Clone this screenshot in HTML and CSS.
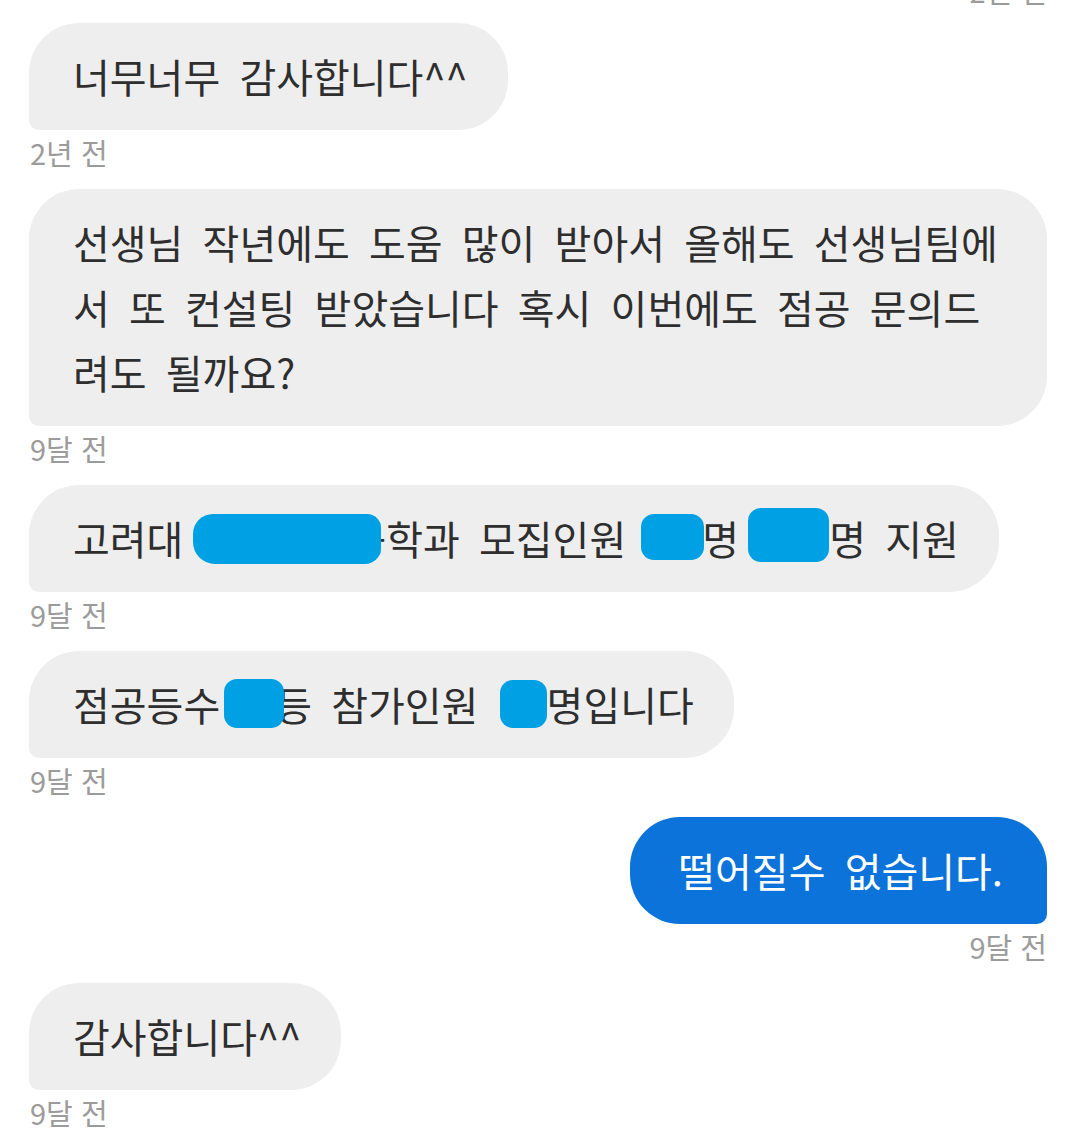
FILE: index.html
```html
<!DOCTYPE html>
<html lang="ko">
<head>
  <meta charset="UTF-8" />
  <meta name="viewport" content="width=device-width, initial-scale=1" />
  <title>메시지</title>
  <link rel="stylesheet" href="styles.css">
</head>
<body>
  <div class="thread">
    <p class="time time-top">2년 전</p>

    <div class="msg">
      <div class="bubble">너무너무 감사합니다^^</div>
      <p class="time">2년 전</p>
    </div>

    <div class="msg">
      <div class="bubble">선생님 작년에도 도움 많이 받아서 올해도 선생님팀에 서 또 컨설팅 받았습니다 혹시 이번에도 점공 문의드려도 될까요?</div>
      <p class="time">9달 전</p>
    </div>

    <div class="msg">
      <div class="bubble">고려대<span class="hide h1"></span>공학과 모집인원<span class="hide h2"></span>명 <span class="hide h3"></span>명 지원</div>
      <p class="time">9달 전</p>
    </div>

    <div class="msg">
      <div class="bubble">점공등수<span class="hide h4"></span>등 참가인원 <span class="hide h5"></span>명입니다</div>
      <p class="time">9달 전</p>
    </div>

    <div class="msg mine">
      <div class="bubble">떨어질수 없습니다.</div>
      <p class="time">9달 전</p>
    </div>

    <div class="msg">
      <div class="bubble">감사합니다^^</div>
      <p class="time">9달 전</p>
    </div>
  </div>
  <div class="bottom-line"></div>
</body>
</html>
```

FILE: styles.css
```css
html, body { margin: 0; padding: 0; background: #fff; height: 1139px; overflow: hidden; }
body { font-family: "Noto Sans CJK KR", "Noto Sans", sans-serif; color: #2e2e2e; }
.thread { display: flex; flex-direction: column; padding: 0 30px 0 29px; }
.msg { display: flex; flex-direction: column; align-items: flex-start; }
.msg.mine { align-items: flex-end; }
.bubble { background: #eeeeee; font-size: 40px; line-height: 65px; word-spacing: 8px; padding: 21px 40px 21px 44px; border-radius: 50px 50px 50px 10px; }
.mine .bubble { background: #0b73d9; color: #fff; border-radius: 50px 50px 10px 50px; padding: 21px 44px 21px 48px; }
.time { margin: 2px 0 17px 1px; font-size: 29px; line-height: 40px; color: #9b9b9b; }
.time-top { margin: -30px 0 13px 0; text-align: right; }
.hide { display: inline-block; position: relative; background: #00a0e4; border-radius: 13px; }
.h1 { width: 188px; height: 50px; margin: 0 -32px 0 10px; vertical-align: -9px; border-radius: 20px 14px 16px 22px; }
.h2 { width: 63px; height: 46px; margin: 0 -2px 0 15px; vertical-align: -5px; }
.h3 { width: 81px; height: 54px; margin: 0 0 0 -10px; vertical-align: -7px; }
.h4 { width: 60px; height: 49px; margin: 0 -9px 0 4px; vertical-align: -7px; }
.h5 { width: 47px; height: 48px; margin: 0 0 0 2px; vertical-align: -7px; }
.bottom-line { height: 3px; background: #ececec; }
```
